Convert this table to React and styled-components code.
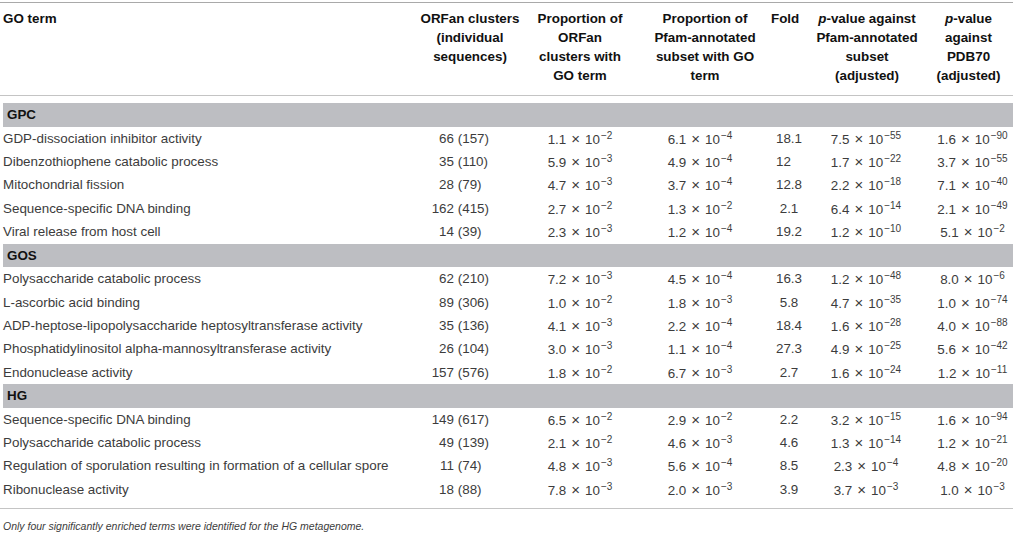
import { createGlobalStyle } from 'styled-components';
import styled from 'styled-components';

const GlobalStyle = createGlobalStyle`
  body {
    margin: 0;
    background: #ffffff;
    font-family: "Liberation Sans", Arial, Helvetica, sans-serif;
  }
`;

const COLS = '418px 104px 116px 130px 42px 114px 89px';

const groups = [
  {
    name: 'GPC',
    rows: [
      ['GDP-dissociation inhibitor activity', 66, 157, '1.1|-2', '6.1|-4', '18.1', '7.5|-55', '1.6|-90'],
      ['Dibenzothiophene catabolic process', 35, 110, '5.9|-3', '4.9|-4', '12', '1.7|-22', '3.7|-55'],
      ['Mitochondrial fission', 28, 79, '4.7|-3', '3.7|-4', '12.8', '2.2|-18', '7.1|-40'],
      ['Sequence-specific DNA binding', 162, 415, '2.7|-2', '1.3|-2', '2.1', '6.4|-14', '2.1|-49'],
      ['Viral release from host cell', 14, 39, '2.3|-3', '1.2|-4', '19.2', '1.2|-10', '5.1|-2'],
    ],
  },
  {
    name: 'GOS',
    rows: [
      ['Polysaccharide catabolic process', 62, 210, '7.2|-3', '4.5|-4', '16.3', '1.2|-48', '8.0|-6'],
      ['L-ascorbic acid binding', 89, 306, '1.0|-2', '1.8|-3', '5.8', '4.7|-35', '1.0|-74'],
      ['ADP-heptose-lipopolysaccharide heptosyltransferase activity', 35, 136, '4.1|-3', '2.2|-4', '18.4', '1.6|-28', '4.0|-88'],
      ['Phosphatidylinositol alpha-mannosyltransferase activity', 26, 104, '3.0|-3', '1.1|-4', '27.3', '4.9|-25', '5.6|-42'],
      ['Endonuclease activity', 157, 576, '1.8|-2', '6.7|-3', '2.7', '1.6|-24', '1.2|-11'],
    ],
  },
  {
    name: 'HG',
    rows: [
      ['Sequence-specific DNA binding', 149, 617, '6.5|-2', '2.9|-2', '2.2', '3.2|-15', '1.6|-94'],
      ['Polysaccharide catabolic process', 49, 139, '2.1|-2', '4.6|-3', '4.6', '1.3|-14', '1.2|-21'],
      ['Regulation of sporulation resulting in formation of a cellular spore', 11, 74, '4.8|-3', '5.6|-4', '8.5', '2.3|-4', '4.8|-20'],
      ['Ribonuclease activity', 18, 88, '7.8|-3', '2.0|-3', '3.9', '3.7|-3', '1.0|-3'],
    ],
  },
];

export default function App() {
  return (
    <>
      <GlobalStyle />
      <Page>
        <Table>
          <HeadRow>
            <HeadCell $align="left" $padLeft={3}>GO term</HeadCell>
            <HeadCell>ORFan clusters<br />(individual<br />sequences)</HeadCell>
            <HeadCell>Proportion of<br />ORFan<br />clusters with<br />GO term</HeadCell>
            <HeadCell $padLeft={4}>Proportion of<br />Pfam-annotated<br />subset with GO<br />term</HeadCell>
            <HeadCell $align="left" $padLeft={3}>Fold</HeadCell>
            <HeadCell><i>p</i>-value against<br />Pfam-annotated<br />subset<br />(adjusted)</HeadCell>
            <HeadCell><i>p</i>-value<br />against<br />PDB70<br />(adjusted)</HeadCell>
          </HeadRow>

          <Body>
            {groups.map((g) => (
              <Group key={g.name}>
                <Band>{g.name}</Band>
                {g.rows.map((r, i) => (
                  <DataRow key={g.name + i}>
                    <TermCell>{r[0]}</TermCell>
                    <CountCell>
                      <CountNum>{r[1]}</CountNum>&nbsp;({r[2]})
                    </CountCell>
                    <Cell><Sci v={r[3]} /></Cell>
                    <Cell $padRight={6}><Sci v={r[4]} /></Cell>
                    <Cell>
                      <FoldValue v={r[5]} />
                    </Cell>
                    <Cell $padRight={2}><Sci v={r[6]} /></Cell>
                    <Cell $padLeft={8}><Sci v={r[7]} /></Cell>
                  </DataRow>
                ))}
              </Group>
            ))}
          </Body>
        </Table>
        <Footnote>Only four significantly enriched terms were identified for the HG metagenome.</Footnote>
      </Page>
    </>
  );
}

function Sci({ v }) {
  const [m, e] = v.split('|');
  return (
    <span>
      {m}<Times>×</Times>10<Sup>{e.replace('-', '−')}</Sup>
    </span>
  );
}

function FoldValue({ v }) {
  // "12" has no decimal in the source, so it keeps the width of the others
  if (v.indexOf('.') === -1) {
    return (
      <span>
        {v}
        <Ghost>.0</Ghost>
      </span>
    );
  }
  return <span>{v}</span>;
}

const Page = styled.div`
  width: 1016px;
  padding-top: 2px;
`;

const Table = styled.div`
  width: 1013px;
  border-top: 1px solid #a9a9a9;
  border-bottom: 1px solid #c4c4c4;
  padding-bottom: 7px;
`;

const HeadRow = styled.div`
  display: grid;
  grid-template-columns: ${COLS};
  padding: 6px 0 10px;
  border-bottom: 1px solid #c4c4c4;
`;

const HeadCell = styled.div`
  font-size: 13.4px;
  font-weight: bold;
  line-height: 19px;
  color: #111111;
  text-align: ${(p) => p.$align || 'center'};
  padding-left: ${(p) => p.$padLeft || 0}px;

  i {
    font-style: italic;
  }
`;

const Body = styled.div`
  display: flex;
  flex-direction: column;
  padding-top: 7px;
`;

const Group = styled.div`
  display: flex;
  flex-direction: column;
`;

const Band = styled.div`
  margin-left: 3px;
  height: 23.6px;
  line-height: 23.6px;
  padding-left: 4px;
  background: #bdbec2;
  font-size: 13.4px;
  font-weight: bold;
  color: #111111;
`;

const DataRow = styled.div`
  display: grid;
  grid-template-columns: ${COLS};
  height: 23.4px;
  line-height: 23.4px;
  font-size: 13.4px;
  color: #3c3c3c;
  white-space: nowrap;
`;

const TermCell = styled.div`
  padding-left: 3px;
`;

const CountCell = styled.div`
  padding-left: 13px;
`;

const CountNum = styled.span`
  display: inline-block;
  width: 23px;
  text-align: right;
`;

const Cell = styled.div`
  text-align: center;
  padding-left: ${(p) => p.$padLeft || 0}px;
  padding-right: ${(p) => p.$padRight || 0}px;
`;

const Times = styled.span`
  display: inline-block;
  font-size: 15px;
  margin: 0 5px 0 5px;
`;

const Sup = styled.sup`
  font-size: 10px;
  line-height: 0;
  vertical-align: 5px;
  margin-left: 1px;
`;

const Ghost = styled.span`
  visibility: hidden;
`;

const Footnote = styled.p`
  margin: 9px 0 0 3px;
  font-size: 10.5px;
  line-height: 17px;
  font-style: italic;
  color: #3c3c3c;
`;
